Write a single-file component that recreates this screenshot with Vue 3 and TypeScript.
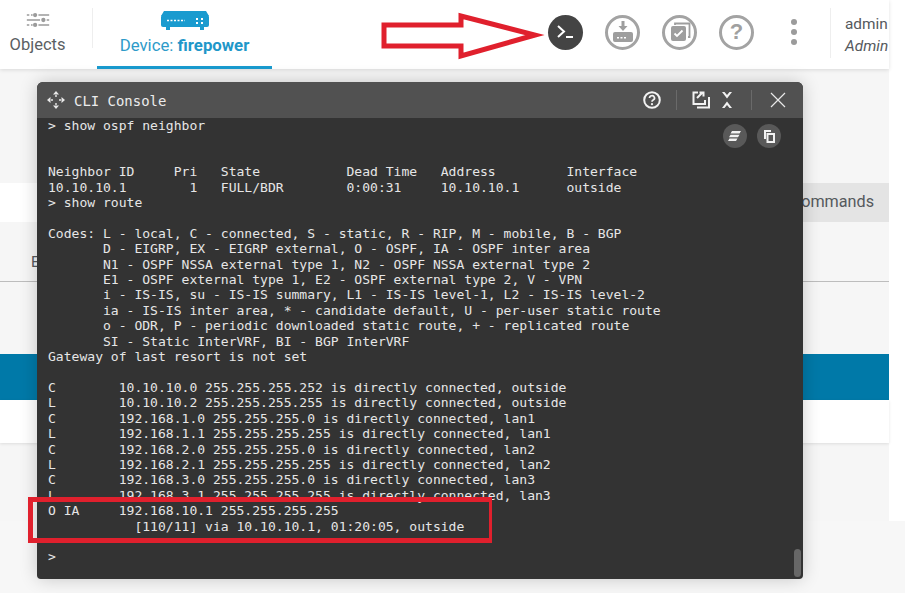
<script setup lang="ts">
const lines: string[] = [
  '> show ospf neighbor',
  '',
  '',
  'Neighbor ID     Pri   State           Dead Time   Address         Interface',
  '10.10.10.1        1   FULL/BDR        0:00:31     10.10.10.1      outside',
  '> show route',
  '',
  'Codes: L - local, C - connected, S - static, R - RIP, M - mobile, B - BGP',
  '       D - EIGRP, EX - EIGRP external, O - OSPF, IA - OSPF inter area',
  '       N1 - OSPF NSSA external type 1, N2 - OSPF NSSA external type 2',
  '       E1 - OSPF external type 1, E2 - OSPF external type 2, V - VPN',
  '       i - IS-IS, su - IS-IS summary, L1 - IS-IS level-1, L2 - IS-IS level-2',
  '       ia - IS-IS inter area, * - candidate default, U - per-user static route',
  '       o - ODR, P - periodic downloaded static route, + - replicated route',
  '       SI - Static InterVRF, BI - BGP InterVRF',
  'Gateway of last resort is not set',
  '',
  'C        10.10.10.0 255.255.255.252 is directly connected, outside',
  'L        10.10.10.2 255.255.255.255 is directly connected, outside',
  'C        192.168.1.0 255.255.255.0 is directly connected, lan1',
  'L        192.168.1.1 255.255.255.255 is directly connected, lan1',
  'C        192.168.2.0 255.255.255.0 is directly connected, lan2',
  'L        192.168.2.1 255.255.255.255 is directly connected, lan2',
  'C        192.168.3.0 255.255.255.0 is directly connected, lan3',
  'L        192.168.3.1 255.255.255.255 is directly connected, lan3',
  'O IA     192.168.10.1 255.255.255.255',
  '           [110/11] via 10.10.10.1, 01:20:05, outside',
  '',
  '>',
]
const output = lines.join('\n')
</script>

<template>
  <div class="screen">
    <div class="upper">
      <header class="topbar">
        <div class="tab objects">
          <svg class="tab-icon" width="24" height="16" viewBox="4 1 29 18" fill="#9b9b9b">
            <path d="M5 3h3v2H5zM10 3h2v2h-2zM19 3h13v2H19z" />
            <circle cx="15" cy="4" r="2.6" />
            <path d="M5 9h16v2H5zM29 9h3v2h-3z" />
            <circle cx="25" cy="10" r="2.6" />
            <path d="M5 15h3v2H5zM10 15h2v2h-2zM19 15h13v2H19z" />
            <circle cx="15" cy="16" r="2.6" />
          </svg>
          <span>Objects</span>
        </div>
        <div class="tab-sep"></div>
        <div class="tab device">
          <svg class="tab-icon" width="50" height="20" viewBox="0 0 50 20">
            <path d="M4 0h42l3 5H1z" fill="#1a9bcf" />
            <rect x="1" y="4" width="48" height="12" rx="2" fill="#1a9bcf" />
            <path d="M6 16h4v3H6zM40 16h4v3h-4z" fill="#1a9bcf" />
            <path d="M7 9.500h18" stroke="#fff" stroke-width="1.500" stroke-dasharray="2 1.500" />
            <path d="M36 7h2v2h-2zM36 11h2v2h-2zM41 7h2v2h-2zM41 11h2v2h-2z" fill="#fff" />
          </svg>
          <span>Device: <b>firepower</b></span>
        </div>
        <div class="spacer"></div>
        <div class="actions">
          <button class="cli-btn" type="button" aria-label="CLI">
            <svg width="20" height="16" viewBox="0 0 20 16" fill="none" stroke="#fff" stroke-width="2">
              <path d="M2 2l6 5.500-6 5.500" />
              <path d="M10 13h7" />
            </svg>
          </button>
          <button class="ring" type="button" aria-label="Deploy">
            <svg width="24" height="24" viewBox="0 0 24 24" fill="#9e9e9e">
              <path d="M10.500 1h3v5h3l-4.500 5-4.500-5h3z" />
              <rect x="2" y="12" width="20" height="10" rx="2" />
              <path d="M6 17h2v1.500H6zM9.500 17h2v1.500h-2zM13 17h2v1.500h-2z" fill="#fff" />
            </svg>
          </button>
          <button class="ring" type="button" aria-label="Tasks">
            <svg width="24" height="24" viewBox="0 0 24 24" fill="none">
              <path d="M7 5V3.500h14.500V17H20" stroke="#9e9e9e" stroke-width="1.800" />
              <rect x="3" y="6" width="15" height="15" rx="2" fill="#9e9e9e" />
              <path d="M6.500 13.500l2.500 2.500 5.500-5.500" stroke="#fff" stroke-width="1.800" />
            </svg>
          </button>
          <button class="ring help" type="button" aria-label="Help">?</button>
          <div class="kebab"><i></i><i></i><i></i></div>
        </div>
        <div class="user">
          <span>admin</span>
          <em>Admin</em>
        </div>
      </header>

      <div class="strip">
        <div class="strip-right">Advanced Commands</div>
      </div>
      <div class="filters"><span>E</span></div>
      <div class="plain"></div>
      <div class="blue-row"></div>
      <div class="white-row"></div>
      <div class="rest"></div>
    </div>
    <div class="lower"></div>

    <section class="console">
      <div class="title">
        <svg width="20" height="20" viewBox="0 0 20 20" fill="#e8e8e8">
          <path d="M10 1l3 3.500H7zM10 19l-3-3.500h6zM1 10l3.500-3v6zM19 10l-3.500 3V7z" />
          <path d="M9.300 5h1.400v2h-1.400zM9.300 13h1.400v2H9.300zM5 9.300h2v1.400H5zM13 9.300h2v1.400h-2z" />
        </svg>
        <span class="title-text">CLI Console</span>
        <div class="spacer"></div>
        <svg class="ti help-i" width="18" height="18" viewBox="0 0 18 18" fill="none">
          <circle cx="9" cy="9" r="7.800" stroke="#f2f2f2" stroke-width="2" />
          <path d="M6.500 7a2.500 2.300 0 1 1 3.700 2c-.9.500-1.200 1-1.200 1.800" stroke="#f2f2f2" stroke-width="1.700" />
          <circle cx="9" cy="13.200" r="1.100" fill="#f2f2f2" />
        </svg>
        <div class="tsep first"></div>
        <svg class="ti pop" width="18" height="18" viewBox="0 0 18 18" fill="none" stroke="#f2f2f2" stroke-width="2">
          <path d="M6 1.500H1.500V13H13V9" />
          <path d="M5 7l5-5M7.500 1.500h4v4" />
          <path d="M5 16.500h12V6" />
        </svg>
        <svg class="ti col" width="12" height="18" viewBox="0 0 12 18" fill="#f2f2f2">
          <path d="M1 1h2.500L6 4l2.500-3H11L6 7.500z" />
          <path d="M1 17h2.500L6 14l2.500 3H11L6 10.500z" />
        </svg>
        <div class="tsep"></div>
        <svg class="ti close" width="16" height="16" viewBox="0 0 16 16" stroke="#e8e8e8" stroke-width="1.200">
          <path d="M1 1l14 14M15 1L1 15" />
        </svg>
      </div>
      <div class="body">
        <pre class="output">{{ output }}</pre>
        <div class="tools">
          <button class="round" type="button" aria-label="Clear">
            <svg width="14" height="12" viewBox="0 0 14 12" fill="#f2f2f2">
              <path d="M4 1h9l-1.500 2.500h-9zM2.500 4.800h9L10 7.300H1zM1.500 8.500h8L8 11H0z" />
            </svg>
          </button>
          <button class="round" type="button" aria-label="Copy">
            <svg width="12" height="13" viewBox="0 0 12 13" fill="none" stroke="#f2f2f2">
              <path d="M2 9V1h6" stroke-width="2" />
              <rect x="4.500" y="4" width="6.500" height="8" stroke-width="2" />
            </svg>
          </button>
        </div>
        <div class="thumb"></div>
      </div>
    </section>

    <svg class="arrow" width="166" height="52" viewBox="0 0 166 52">
      <path d="M4 13h77V4l74 19-74 21V34H4z" fill="#fff" stroke="#e0202d" stroke-width="5" />
    </svg>
    <div class="callout"></div>
  </div>
</template>

<style>
html, body { margin: 0; background: #fff; }
</style>

<style scoped>
.screen { position: relative; width: 905px; height: 593px; overflow: hidden; background: #fff; font-family: Roboto, "Liberation Sans", sans-serif; }
.upper { width: 889px; height: 521px; display: flex; flex-direction: column; background: #f6f6f6; }
.lower { height: 72px; background: #f7f7f7; }
.topbar { flex: none; height: 69px; display: flex; align-items: stretch; background: #fff; box-shadow: 0 1px 4px rgba(0, 0, 0, .12); position: relative; overflow: hidden; }
.tab { display: flex; flex-direction: column; align-items: center; box-sizing: border-box; }
.tab.objects { width: 75px; color: #5b5f63; padding-top: 12px; gap: 7px; font-size: 16.500px; }
.tab.objects span { line-height: 20px; }
.tab-sep { width: 1px; height: 40px; margin: 8px 0 0 17px; background: #eee; }
.tab.device { width: 175px; margin-left: 4px; color: #2e9bc9; padding-top: 11px; gap: 4px; border-bottom: 3px solid #1a9bcf; font-size: 16.800px; }
.tab.device span { line-height: 20px; }
.tab.device b { font-weight: 700; color: #1f97c9; }
.spacer { flex: 1; }
.actions { display: flex; align-items: center; padding-bottom: 5px; }
button { padding: 0; border: 0; background: none; display: flex; align-items: center; justify-content: center; }
.cli-btn { width: 35px; height: 35px; border-radius: 50%; background: #444; margin-right: 22px; }
.ring { width: 35px; height: 35px; box-sizing: border-box; border: 3px solid #a3a3a3; border-radius: 50%; margin-right: 22px; background: #fff; }
.help { margin-right: 0; color: #a0a0a0; font-size: 22px; font-weight: 700; font-family: "Liberation Sans", sans-serif; }
.kebab { display: flex; flex-direction: column; gap: 4px; margin: 0 33px 0 37px; }
.kebab i { width: 6px; height: 6px; border-radius: 50%; background: #9b9b9b; }
.user { flex: none; width: 59px; height: 50px; box-sizing: border-box; margin-top: 8px; padding: 7px 0 0 14px; border-left: 1px solid #eee; overflow: hidden; white-space: nowrap; font-size: 15.400px; color: #55595d; display: flex; flex-direction: column; gap: 3px; }
.user span, .user em { line-height: 19px; }
.strip { flex: none; height: 39px; margin-top: 114px; background: #fff; display: flex; justify-content: flex-end; }
.strip-right { width: 240px; background: #e4e4e4; font-size: 16.200px; color: #55595d; line-height: 38px; box-sizing: border-box; white-space: nowrap; text-align: right; padding-right: 15px; }
.filters { flex: none; height: 60px; box-sizing: border-box; border-bottom: 1px solid #bdbdbd; padding: 31px 0 0 31px; font-size: 15px; line-height: 18px; color: #55595d; }
.plain { flex: none; height: 72px; }
.blue-row { flex: none; height: 46px; background: #0079a8; }
.white-row { flex: none; height: 43px; background: #fff; box-shadow: 0 1px 3px rgba(0, 0, 0, .1); }
.rest { flex: 1; }
.console { position: absolute; left: 37px; top: 82px; width: 766px; height: 497px; border-radius: 6px; background: #333; display: flex; flex-direction: column; box-shadow: 0 0 18px rgba(0, 0, 0, .2); }
.title { flex: none; height: 36px; background: #515151; border-radius: 6px 6px 0 0; display: flex; align-items: center; padding: 0 17px 0 9px; box-sizing: border-box; color: #ececec; }
.title-text { margin-left: 8px; padding-top: 1px; font: 13.950px/20px "DejaVu Sans Mono", "Liberation Mono", monospace; }
.ti { flex: none; }
.help-i { margin-right: 15px; }
.tsep { width: 1px; height: 20px; background: #6a6a6a; margin-right: 16px; }
.tsep.first { margin-right: 15px; }
.pop { margin-right: 11px; }
.col { margin-right: 18px; }
.close { margin-left: 2px; }
.body { flex: 1; position: relative; background: #333; border-radius: 0 0 4px 4px; overflow: hidden; }
.output { margin: 0; padding: 0 0 0 11px; font: 13.060px/15.400px "DejaVu Sans Mono", "Liberation Mono", monospace; color: #e6e6e6; white-space: pre; }
.tools { position: absolute; top: 6px; right: 22px; display: flex; gap: 10px; }
.round { width: 24px; height: 24px; border-radius: 50%; background: #595959; }
.thumb { position: absolute; right: 2px; bottom: 2px; width: 7px; height: 28px; border-radius: 4px; background: #676767; }
.arrow { position: absolute; left: 380px; top: 12px; }
.callout { position: absolute; left: 28px; top: 497px; width: 464px; height: 46px; box-sizing: border-box; border: 5px solid #e0202d; border-right-width: 3px; }
</style>
